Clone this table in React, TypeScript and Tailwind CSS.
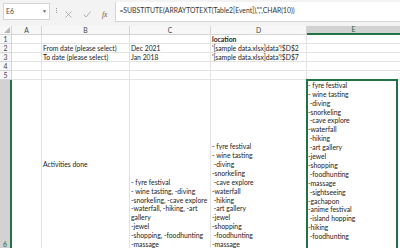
import React from "react"

const FONT = { fontFamily: "Lato, 'Liberation Sans', sans-serif" }

const colC = [
  "- fyre festival",
  "- wine tasting, -diving",
  "-snorkeling, -cave explore",
  "-waterfall, -hiking, -art",
  "gallery",
  "-jewel",
  "-shopping, -foodhunting",
  "-massage",
]

const colD = [
  "- fyre festival",
  "- wine tasting",
  " -diving",
  "-snorkeling",
  " -cave explore",
  "-waterfall",
  " -hiking",
  " -art gallery",
  "-jewel",
  "-shopping",
  " -foodhunting",
  "-massage",
]

const colE = [
  "- fyre festival",
  "- wine tasting",
  " -diving",
  "-snorkeling",
  " -cave explore",
  "-waterfall",
  " -hiking",
  " -art gallery",
  "-jewel",
  "-shopping",
  " -foodhunting",
  "-massage",
  " -sightseeing",
  "-gachapon",
  "-anime festival",
  " -island hopping",
  "-hiking",
  " -foodhunting",
  " ",
]

function Lines({ lines }: { lines: string[] }) {
  return (
    <div className="whitespace-pre leading-[8.9px]">
      {lines.map((l, i) => (
        <div key={i}>{l}</div>
      ))}
    </div>
  )
}

const cell = "border-r border-b border-[#e3e3e3] px-[1px] flex items-end overflow-hidden whitespace-nowrap leading-[8px]"
const colHead = "bg-[#f7f7f7] border-r border-b border-[#d5d5d5] flex items-center justify-center text-[#444]"
const rowHead = "bg-[#f7f7f7] border-r border-b border-[#d5d5d5] flex items-end justify-center text-[#444] leading-[8px]"

export default function App() {
  return (
    <div className="w-[400px] h-[248px] overflow-hidden bg-white text-[6.8px] text-[#222]" style={FONT}>
      {/* formula bar */}
      <div className="h-[26px] bg-[#f3f3f3] flex items-start pt-[2px]">
        <div className="ml-[3px] mt-[1px] w-[47px] h-[17px] bg-white border border-[#d4d4d4] flex items-center justify-between px-[2px] text-[#444]">
          <span>E6</span>
          <span className="text-[5px] text-[#666]">▼</span>
        </div>
        <div className="ml-[6px] mt-[6px] flex flex-col gap-[1px]">
          <div className="w-[1px] h-[1px] bg-[#999]" />
          <div className="w-[1px] h-[1px] bg-[#999]" />
          <div className="w-[1px] h-[1px] bg-[#999]" />
        </div>
        <div className="ml-[8px] mt-[7px] flex items-center gap-[11px]">
          <svg width="7" height="7" viewBox="0 0 7 7">
            <path d="M0.5 0.5 L6.5 6.5 M6.5 0.5 L0.5 6.5" stroke="#a0a0a0" strokeWidth="0.8" fill="none" />
          </svg>
          <svg width="8" height="7" viewBox="0 0 8 7">
            <path d="M0.5 3.5 L3 6 L7.5 0.5" stroke="#a0a0a0" strokeWidth="0.8" fill="none" />
          </svg>
          <span className="text-[7.5px] italic text-[#555]" style={{ fontFamily: "'Liberation Serif', serif" }}>
            fx
          </span>
        </div>
        <div className="ml-[8px] flex-1 h-[20px] bg-white border-l border-b border-[#d4d4d4] pl-[3px] pt-[4px] leading-[8px] text-[#333] whitespace-nowrap overflow-hidden">
          =SUBSTITUTE(ARRAYTOTEXT(Table2[Event]),",",CHAR(10))
        </div>
      </div>

      {/* sheet */}
      <div className="grid grid-cols-[12px_30px_88px_81px_96px_100px] grid-rows-[9px_9px_9px_9px_9px_9px_170px]">
        <div className="bg-[#f7f7f7] border-r border-b border-[#d5d5d5] flex items-end justify-end p-[1px]">
          <svg width="6" height="6" viewBox="0 0 6 6">
            <path d="M6 0 L6 6 L0 6 Z" fill="#b8b8b8" />
          </svg>
        </div>
        <div className={colHead}>A</div>
        <div className={colHead}>B</div>
        <div className={colHead}>C</div>
        <div className={colHead}>D</div>
        <div className="bg-[#d2d2d2] border-b-2 border-b-[#217346] flex items-center justify-center text-[#1d5e37] pr-[7px]">
          E
        </div>

        <div className={rowHead}>1</div>
        <div className={cell} />
        <div className={cell} />
        <div className={cell} />
        <div className={cell + " font-bold"}>location</div>
        <div className={cell} />

        <div className={rowHead}>2</div>
        <div className={cell} />
        <div className={cell}>From date (please select)</div>
        <div className={cell}>Dec 2021</div>
        <div className={cell}>'[sample data.xlsx]data'!$D$2</div>
        <div className={cell} />

        <div className={rowHead}>3</div>
        <div className={cell} />
        <div className={cell}>To date (please select)</div>
        <div className={cell}>Jan 2018</div>
        <div className={cell}>'[sample data.xlsx]data'!$D$7</div>
        <div className={cell} />

        <div className={rowHead}>4</div>
        <div className={cell} />
        <div className={cell} />
        <div className={cell} />
        <div className={cell} />
        <div className={cell} />

        <div className={rowHead}>5</div>
        <div className={cell} />
        <div className={cell} />
        <div className={cell} />
        <div className={cell} />
        <div className={cell} />

        <div className="bg-[#d2d2d2] border-b border-[#d5d5d5] border-r-2 border-r-[#217346] flex items-end justify-center text-[#1d5e37] leading-[8px] pb-[1px]">
          6
        </div>
        <div className={cell} />
        <div className="border-r border-b border-[#e3e3e3] px-[1px] flex items-center overflow-hidden whitespace-nowrap">
          Activities done
        </div>
        <div className={cell}>
          <Lines lines={colC} />
        </div>
        <div className={cell}>
          <Lines lines={colD} />
        </div>
        <div className="relative px-[1px] flex items-end overflow-visible">
          <Lines lines={colE} />
          <div className="absolute -left-[1px] -top-[1px] w-[92px] h-[180px] border-2 border-[#217346]" />
        </div>
      </div>
    </div>
  )
}
